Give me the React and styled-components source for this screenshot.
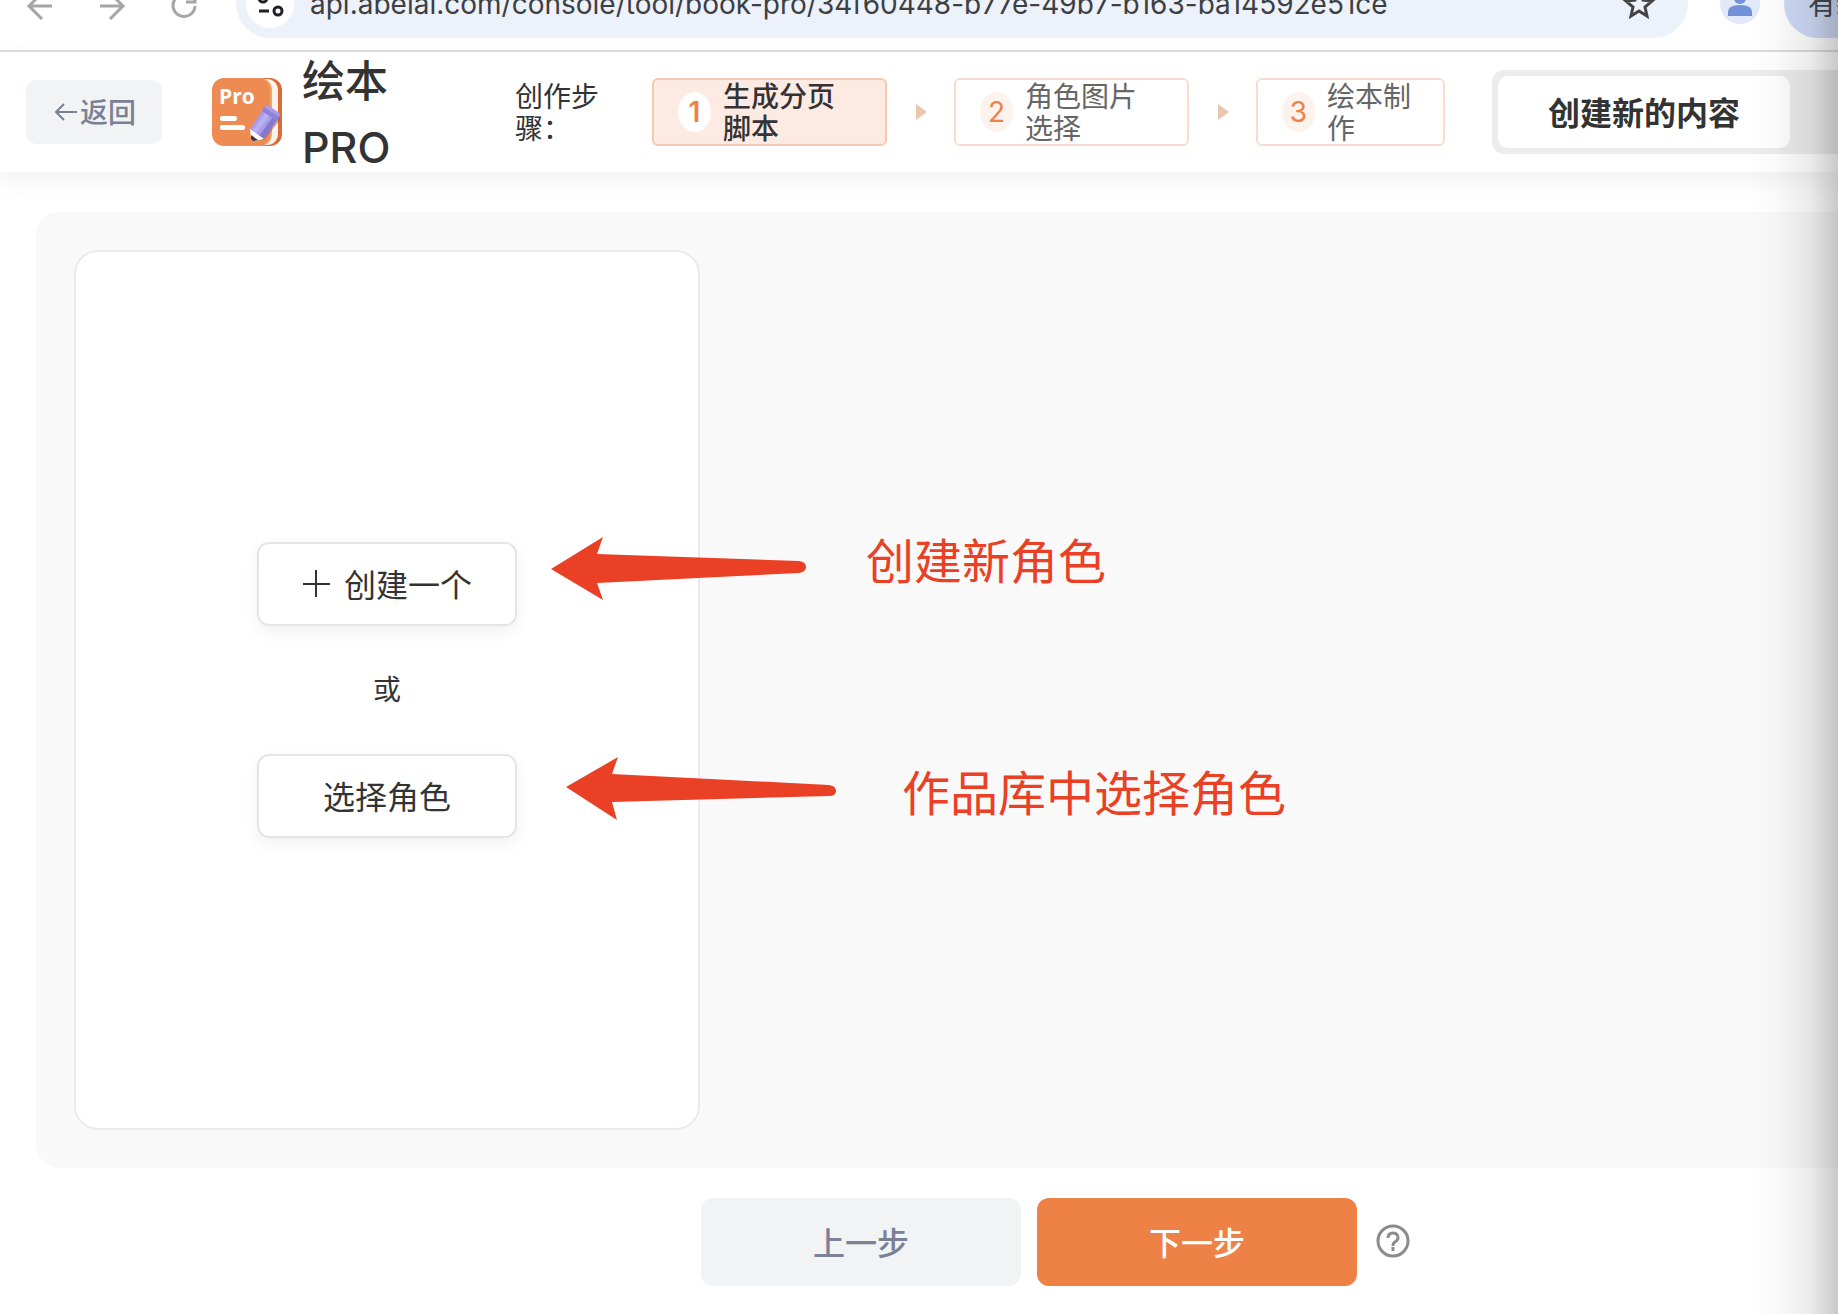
import styled, { createGlobalStyle } from "styled-components";

const GlobalStyle = createGlobalStyle`
  * {
    box-sizing: border-box;
  }

  body {
    margin: 0;
    overflow: hidden;

    font-family: Inter, "Noto Sans CJK SC", sans-serif;

    color: #333333;
    background-color: #ffffff;
  }

  button {
    margin: 0;
    padding: 0;

    border: none;

    font-family: inherit;

    cursor: pointer;
  }
`;

const Page = styled.div`
  display: flex;
  flex-direction: column;

  min-height: 100vh;
`;

const BrowserBar = styled.div`
  display: flex;
  flex-direction: row;

  align-items: flex-end;

  height: 52px;

  padding-bottom: 12px;

  border-bottom: 2px solid #dedede;

  overflow: hidden;
`;

const NavIcons = styled.div`
  display: flex;

  flex-shrink: 0;

  gap: 40px;

  padding: 0 36px 18px 24px;
`;

const IconButton = styled.button`
  display: flex;

  background: none;
`;

const AddressBar = styled.div`
  display: flex;

  flex: 1;

  align-items: center;

  height: 68px;

  padding: 0 32px 0 10px;

  border-radius: 34px;

  background-color: #edf1fa;
`;

const SiteInfo = styled.button`
  display: flex;

  align-items: center;
  justify-content: center;

  width: 48px;
  height: 48px;

  border-radius: 50%;

  background-color: #ffffff;
`;

const AddressInput = styled.input`
  flex: 1;

  min-width: 0;

  padding: 0 0 0 16px;

  border: none;
  outline: none;

  font-family: inherit;
  font-size: 28px;
  line-height: 32px;

  color: #3c3f43;
  background: none;
`;

const Avatar = styled.button`
  flex-shrink: 0;

  width: 40px;
  height: 40px;

  margin: 0 24px 14px 32px;

  border-radius: 50%;

  overflow: hidden;

  background-color: #e1e9fb;
`;

const UpdateButton = styled.button`
  flex-shrink: 0;

  width: 54px;
  height: 68px;

  padding: 0 0 2px 24px;

  border-radius: 34px 0 0 34px;

  overflow: hidden;

  font-size: 28px;
  text-align: left;
  white-space: nowrap;

  color: #44474d;
  background-color: #cfdcf8;
`;

const Header = styled.header`
  display: flex;
  flex-direction: row;

  align-items: center;

  height: 120px;

  padding-left: 26px;

  background-color: #ffffff;
  box-shadow: 0 8px 24px rgba(0, 0, 0, 0.06);
`;

const BackButton = styled.button`
  display: flex;

  flex-shrink: 0;

  align-items: center;
  justify-content: center;

  gap: 2px;

  width: 136px;
  height: 64px;

  margin-right: 50px;
  padding: 0 0 2px 2px;

  border-radius: 10px;

  font-size: 28px;
  font-weight: 500;

  color: #7b8194;
  background-color: #f1f3f5;
`;

const Title = styled.h1`
  flex-shrink: 0;

  width: 92px;

  margin: 0 121px 0 19px;
  padding-top: 4px;

  font-size: 43px;
  font-weight: 500;
  line-height: 66px;
`;

const StepsLabel = styled.div`
  flex-shrink: 0;

  width: 90px;

  margin-right: 47px;
  padding-top: 2px;

  font-size: 28px;
  line-height: 32px;
`;

const Steps = styled.ol`
  display: flex;

  flex-shrink: 0;

  align-items: center;

  margin: 0 47px 0 0;
  padding: 0;

  list-style: none;
`;

const Step = styled.li`
  display: flex;

  align-items: center;

  gap: 12px;

  width: ${(props) => (props.$narrow ? "189px" : "235px")};
  height: 68px;

  padding: 0 ${(props) => (props.$narrow ? "30px" : "46px")} 0 24px;

  border: 2px solid ${(props) => (props.$active ? "#f5c9b3" : "#f8dccd")};
  border-radius: 6px;

  font-size: 28px;
  font-weight: ${(props) => (props.$active ? 500 : 400)};
  line-height: 32px;

  color: ${(props) => (props.$active ? "#333333" : "#666666")};
  background-color: ${(props) => (props.$active ? "#fdeae3" : "#ffffff")};
`;

const StepNumber = styled.span`
  flex-shrink: 0;

  width: 33px;
  height: 40px;

  border-radius: 50%;

  font-weight: ${(props) => (props.$active ? 600 : 400)};
  line-height: 40px;
  text-align: center;

  color: #ee8145;
  background-color: ${(props) => (props.$active ? "#ffffff" : "#fbf3ec")};
`;

const StepText = styled.span`
  padding-top: 2px;
`;

const StepArrow = styled.li`
  width: 11px;
  height: 16px;

  margin: 0 27px 0 29px;

  clip-path: polygon(0 0, 100% 50%, 0 100%);

  background-color: #e8c6b0;
`;

const ModeTabs = styled.div`
  flex: 1;

  padding: 6px;

  border-radius: 12px 0 0 12px;

  background-color: #ececec;
`;

const ModeTab = styled.button`
  display: block;

  width: 292px;
  height: 72px;

  padding-bottom: 2px;

  border-radius: 10px;

  font-size: 32px;
  font-weight: 700;

  color: #333333;
  background-color: #ffffff;
`;

const Workspace = styled.main`
  position: relative;

  display: flex;

  flex: 1;

  margin: 40px 0 0 36px;
  padding: 38px;

  border-radius: 24px 0 0 24px;

  background-color: #f9f9f9;
`;

const RoleCard = styled.section`
  display: flex;
  flex-direction: column;

  align-items: center;
  justify-content: center;

  gap: 44px;

  width: 626px;

  border: 2px solid #ebebeb;
  border-radius: 24px;

  font-size: 28px;
  line-height: 40px;

  background-color: #ffffff;
`;

const RoleButton = styled.button`
  display: flex;

  align-items: center;
  justify-content: center;

  gap: 14px;

  width: 260px;
  height: 84px;

  padding-bottom: 2px;

  border: 2px solid #e5e5e5;
  border-radius: 12px;

  font-size: 32px;

  color: #333333;
  background-color: #ffffff;
  box-shadow: 0 6px 16px rgba(0, 0, 0, 0.06);
`;

/* Tutorial marks that lie over the card and the workspace */
const Annotation = styled.div`
  position: absolute;
  top: ${(props) => props.$top}px;
  left: ${(props) => props.$left}px;

  font-size: 48px;
  line-height: 64px;
  white-space: nowrap;

  color: #ea4025;

  svg {
    display: block;
  }
`;

const Footer = styled.footer`
  display: flex;

  align-items: center;
  justify-content: center;

  gap: 16px;

  padding: 30px 0 28px 274px;
`;

const FooterButton = styled.button`
  width: 320px;
  height: 88px;

  padding-bottom: 2px;

  border-radius: 12px;

  font-size: 32px;
  font-weight: 500;

  color: ${(props) => (props.$primary ? "#ffffff" : "#7b8194")};
  background-color: ${(props) => (props.$primary ? "#ee8145" : "#f1f3f5")};
`;

const EdgeShade = styled.div`
  position: fixed;
  top: 0;
  right: 0;
  bottom: 0;

  width: 88px;

  pointer-events: none;

  background: linear-gradient(
    to right,
    rgba(0, 0, 0, 0),
    rgba(0, 0, 0, 0.02) 30%,
    rgba(0, 0, 0, 0.08) 68%,
    rgba(0, 0, 0, 0.21)
  );
`;

function Logo() {
  return (
    <svg width="71" height="68" viewBox="0 0 71 68" aria-hidden="true">
      <rect x="20" width="50" height="68" rx="12" fill="#dd6b38" />
      <rect x="18" y="1" width="48" height="66" rx="11" fill="#fbf3ea" />
      <rect x="10" width="50" height="68" rx="12" fill="#f5a069" />
      <rect width="58" height="68" rx="12" fill="#ee8b52" />
      <text
        x="7"
        y="26"
        fill="#ffffff"
        fontFamily="Open Sans, sans-serif"
        fontSize="21"
        fontWeight="700"
      >
        Pro
      </text>
      <rect x="8" y="38" width="17" height="5" rx="2" fill="#ffffff" />
      <rect x="8" y="47" width="25" height="5" rx="2" fill="#ffffff" />
      <path d="M67 35l1 7-16 20-8 0z" fill="#8a4a38" opacity="0.45" />
      <path d="M52 30q2-4 5-2l9 6q3 2 1 5L52 61l-14-10z" fill="#a79bea" />
      <path d="M63 36l4 3-15 22-5-3z" fill="#8577cd" />
      <path d="M54 34l4 3-14 19-4-3z" fill="#b9b0f3" />
      <path d="M50 33l15 10 2-4-15-10z" fill="#8d80d6" />
      <path d="M38 51l14 10-10 2q-3 0-3-3z" fill="#ffffff" />
      <path d="M39 57l7 5-4 1q-3 0-3-3z" fill="#46373a" />
    </svg>
  );
}

const steps = [
  { label: "生成分页脚本", active: true },
  { label: "角色图片选择" },
  { label: "绘本制作", narrow: true },
];

function StepItem({ step, number }) {
  return (
    <Step $active={step.active} $narrow={step.narrow}>
      <StepNumber $active={step.active}>{number}</StepNumber>
      <StepText>{step.label}</StepText>
    </Step>
  );
}

function App() {
  return (
    <Page>
      <GlobalStyle />
      <BrowserBar>
        <NavIcons>
          <IconButton aria-label="Back">
            <svg width="32" height="32" fill="none" stroke="#a5a5a5" strokeWidth="3">
              <path d="M28 18H6M18 5L5 18l13 13" />
            </svg>
          </IconButton>
          <IconButton aria-label="Forward">
            <svg width="32" height="32" fill="none" stroke="#a5a5a5" strokeWidth="3">
              <path d="M4 18h22M14 5l13 13-13 13" />
            </svg>
          </IconButton>
          <IconButton aria-label="Reload">
            <svg width="32" height="32" fill="none" stroke="#a5a5a5" strokeWidth="3">
              <path d="M27 18a11 11 0 1 1-4-9M27 4v10h-9" />
            </svg>
          </IconButton>
        </NavIcons>
        <AddressBar>
          <SiteInfo aria-label="Site information">
            <svg width="28" height="28" fill="none" stroke="#202124" strokeWidth="3">
              <circle cx="7" cy="8" r="4" />
              <path d="M14 8h11M3 21h10" />
              <circle cx="22" cy="21" r="4" />
            </svg>
          </SiteInfo>
          <AddressInput
            aria-label="Address"
            defaultValue="api.abelai.com/console/tool/book-pro/34f60448-b77e-49b7-b163-ba14592e51ce"
          />
          <IconButton aria-label="Bookmark">
            <svg width="34" height="34" viewBox="0 0 34 34" fill="none" stroke="#444444" strokeWidth="3">
              <path d="M17 4l4 9 9 1-7 6 2 9-8-5-8 5 2-9-7-6 9-1z" />
            </svg>
          </IconButton>
        </AddressBar>
        <Avatar aria-label="Profile">
          <svg width="40" height="40" fill="#7391d8">
            <circle cx="20" cy="14" r="6" />
            <path d="M8 32v-4q0-7 12-7t12 7v4z" />
          </svg>
        </Avatar>
        <UpdateButton>有新</UpdateButton>
      </BrowserBar>

      <Header>
        <BackButton>
          <svg width="24" height="24" fill="none" stroke="currentColor" strokeWidth="2">
            <path d="M23 13H2M10 5l-8 8 8 8" />
          </svg>
          返回
        </BackButton>
        <Logo />
        <Title>绘本PRO</Title>
        <StepsLabel>创作步骤：</StepsLabel>
        <Steps>
          <StepItem step={steps[0]} number={1} />
          <StepArrow aria-hidden="true" />
          <StepItem step={steps[1]} number={2} />
          <StepArrow aria-hidden="true" />
          <StepItem step={steps[2]} number={3} />
        </Steps>
        <ModeTabs>
          <ModeTab>创建新的内容</ModeTab>
        </ModeTabs>
      </Header>

      <Workspace>
        <RoleCard>
          <RoleButton>
            <svg width="28" height="28" stroke="currentColor" strokeWidth="2">
              <path d="M14 1v27M1 15h27" />
            </svg>
            创建一个
          </RoleButton>
          <span>或</span>
          <RoleButton>选择角色</RoleButton>
        </RoleCard>
        <Annotation $top={325} $left={515}>
          <svg width="255" height="64" fill="currentColor" aria-hidden="true">
            <path d="M0 32L52 0l-6 17 202 7q7 1 7 6t-7 6L46 46l6 17z" />
          </svg>
        </Annotation>
        <Annotation $top={318} $left={830}>创建新角色</Annotation>
        <Annotation $top={545} $left={530}>
          <svg width="270" height="64" fill="currentColor" aria-hidden="true">
            <path d="M0 30L52 0l-6 17 217 11q7 1 7 6t-7 5L46 45l5 18z" />
          </svg>
        </Annotation>
        <Annotation $top={550} $left={866}>作品库中选择角色</Annotation>
      </Workspace>

      <Footer>
        <FooterButton>上一步</FooterButton>
        <FooterButton $primary>下一步</FooterButton>
        <IconButton aria-label="Help">
          <svg width="38" height="38" viewBox="0 0 38 38" fill="none" stroke="#8b8b8b" strokeWidth="3">
            <circle cx="20" cy="18" r="15" />
            <path d="M15 15q0-5 5-5t5 5q0 2-3 4-2 1-2 4M20 24v4" />
          </svg>
        </IconButton>
      </Footer>
      <EdgeShade />
    </Page>
  );
}

export default App;
